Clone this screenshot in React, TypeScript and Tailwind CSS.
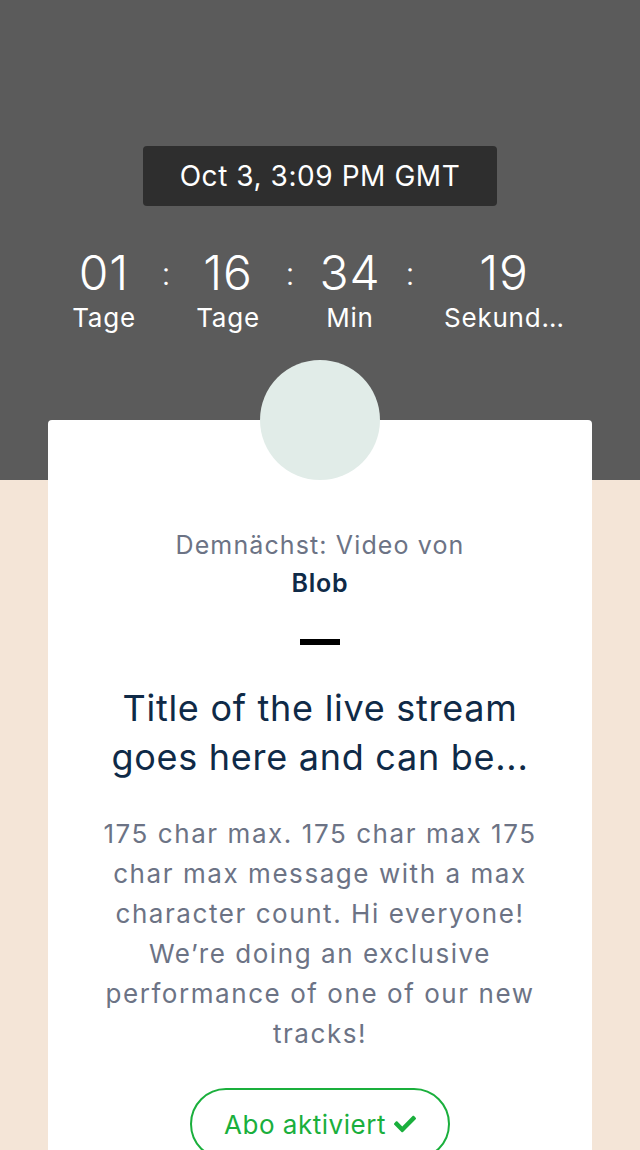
import { FaCheck } from "react-icons/fa";

const units = [
  { value: "01", label: "Tage", width: "w-[100px]" },
  { value: "16", label: "Tage", width: "w-[100px]" },
  { value: "34", label: "Min", width: "w-[96px]" },
  { value: "19", label: "Sekunden", width: "w-[164px]" },
];

function Countdown() {
  return (
    <div className="flex justify-center text-white">
      {units.map((u, i) => (
        <div key={i} className="flex">
          {i > 0 && (
            <div className="w-[24px] pt-[4px] text-center text-[32px] font-light leading-[48px]">:</div>
          )}
          <div className={`${u.width} flex flex-col items-center`}>
            <div className="text-[48px] font-light leading-[54px] tracking-[0.02em]">{u.value}</div>
            <div className="mt-[2px] max-w-[120px] truncate text-[26px] leading-[32px] tracking-[0.03em]">{u.label}</div>
          </div>
        </div>
      ))}
    </div>
  );
}

export default function App() {
  return (
    <div className="min-h-[1150px] bg-[#f4e5d7] font-['Inter',sans-serif]">
      <div className="h-[480px] bg-[#5b5b5b] pt-[146px]">
        <div className="flex justify-center">
          <div className="flex h-[60px] w-[354px] items-center justify-center rounded-[4px] bg-[#2e2e2e] text-[28px] tracking-[0.02em] text-white">
            Oct 3, 3:09 PM GMT
          </div>
        </div>
        <div className="mt-[40px]">
          <Countdown />
        </div>
      </div>

      <div className="relative mx-[48px] -mt-[60px] rounded-t-[4px] bg-white px-[44px] pb-[40px] pt-[106px] text-center">
        <div className="absolute left-1/2 top-[-60px] h-[120px] w-[120px] -translate-x-1/2 rounded-full bg-[#e1ece8]" />
        <p className="text-[25px] leading-[38px] tracking-[0.045em] text-[#6c7385]">Demnächst: Video von</p>
        <p className="text-[25px] font-semibold leading-[38px] tracking-[0.03em] text-[#0f2a47]">Blob</p>
        <div className="mx-auto mt-[37px] h-[6px] w-[40px] bg-black" />
        <h1 className="mt-[39px] text-[36px] leading-[49px] tracking-[0.02em] text-[#0f2a47]">
          Title of the live stream goes here and can be...
        </h1>
        <p className="mt-[32px] text-[26px] leading-[40px] tracking-[0.06em] text-[#6c7385]">
          175 char max. 175 char max 175 char max message with a max character count. Hi everyone! We’re doing an exclusive performance of one of our new tracks!
        </p>
        <div className="mt-[34px] flex justify-center">
          <button className="flex h-[72px] w-[260px] items-center justify-center gap-[8px] rounded-full border-2 border-[#1aaf3c] text-[26px] tracking-[0.02em] text-[#1aaf3c]">
            Abo aktiviert
            <FaCheck className="h-[22px] w-[22px]" />
          </button>
        </div>
      </div>
    </div>
  );
}
